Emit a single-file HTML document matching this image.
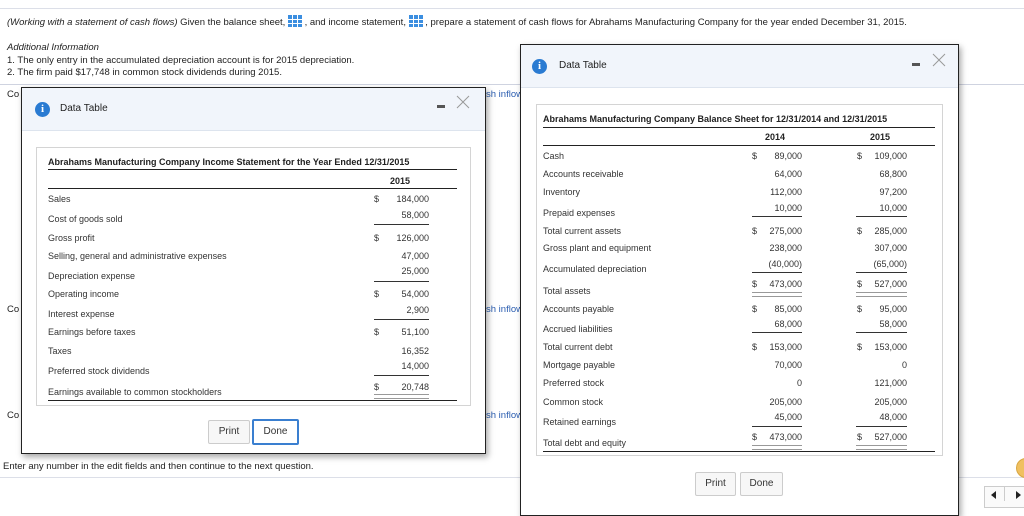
<!DOCTYPE html>
<html><head><meta charset="utf-8"><style>
body{margin:0;width:1024px;height:501px;overflow:hidden;background:#fff;position:relative;font-family:"Liberation Sans",Arial,sans-serif;color:#222}
div{position:absolute}
.t{font-size:9.5px;line-height:12px;white-space:nowrap}
.s{font-size:9px;line-height:12px;white-space:nowrap;color:#333}
.r{text-align:right}
.hl{height:1px;background:#222}
.ul{height:1px;background:#333}
.dbl{height:3px;border-top:1px solid #999;border-bottom:1px solid #999}
.dlg{background:#fff;border:1px solid #222;box-shadow:2px 3px 6px rgba(0,0,0,.35)}
.hdr{background:#f1f5fb;border-bottom:1px solid #dde4ee}
.ic{width:15px;height:15px;border-radius:50%;background:#2a7bd2;color:#fff;font:bold 11px/15px "Liberation Serif",serif;text-align:center}
.btn{border:1px solid #ccc;border-radius:2px;background:#f7f7f7;font-size:10px;line-height:22px;text-align:center;color:#333}
.grid{display:inline-block;width:14px;height:12px;background:#3b8ee0;vertical-align:-2px;background-image:linear-gradient(#fff 0 0),linear-gradient(#fff 0 0),linear-gradient(#fff 0 0),linear-gradient(#fff 0 0);background-size:14px 1px,14px 1px,1px 12px,1px 12px;background-position:0 4px,0 8px,4px 0,9px 0;background-repeat:no-repeat;position:relative}
.bl{color:#2a5db0}
</style></head><body>
<div class="hl" style="left:0;top:8px;width:1024px;background:#dcdfe8"></div>
<div class="t" style="left:7px;top:15px"><i>(Working with a statement of cash flows)</i> Given the balance sheet, <span class="grid"></span> , and income statement, <span class="grid"></span> , prepare a statement of cash flows for Abrahams Manufacturing Company for the year ended December 31, 2015.</div>
<div class="t" style="left:7px;top:42px"><i>Additional Information</i></div>
<div class="t" style="left:7px;top:55px">1. The only entry in the accumulated depreciation account is for 2015 depreciation.</div>
<div class="t" style="left:7px;top:67px">2. The firm paid $17,748 in common stock dividends during 2015.</div>
<div class="hl" style="left:0;top:84px;width:1024px;background:#cfd3e0"></div>
<div class="t" style="left:7px;top:89px">Co</div>
<div class="t" style="left:7px;top:304px">Co</div>
<div class="t" style="left:7px;top:410px">Co</div>
<div class="t bl" style="left:486px;top:89px">sh inflow</div>
<div class="t bl" style="left:486px;top:304px">sh inflow</div>
<div class="t bl" style="left:486px;top:410px">sh inflow</div>
<div class="t" style="left:3px;top:461px">Enter any number in the edit fields and then continue to the next question.</div>
<div class="hl" style="left:0;top:477px;width:1024px;background:#dcdfe8"></div>
<div style="left:1016px;top:458px;width:18px;height:18px;border-radius:50%;background:#f0c060;border:1px solid #d9a640"></div>
<div style="left:984px;top:486px;width:40px;height:20px;border:1px solid #ccc;background:#fafafa"></div>
<div style="left:991px;top:491px;width:0;height:0;border-right:5px solid #222;border-top:4px solid transparent;border-bottom:4px solid transparent"></div>
<div style="left:1004px;top:486px;width:1px;height:15px;background:#ccc"></div>
<div style="left:1016px;top:491px;width:0;height:0;border-left:5px solid #222;border-top:4px solid transparent;border-bottom:4px solid transparent"></div>

<!-- left dialog -->
<div class="dlg" style="left:21px;top:87px;width:463px;height:365px"></div>
<div class="hdr" style="left:22px;top:88px;width:463px;height:42px"></div>
<div class="ic" style="left:35px;top:102px">i</div>
<div class="t" style="left:60px;top:103px;font-size:10px">Data Table</div>
<div style="left:437px;top:105px;width:8px;height:3px;background:#555"></div>
<svg style="position:absolute;left:456px;top:95px" width="14" height="14"><path d="M1 1L13 13M13 1L1 13" stroke="#999" stroke-width="1" fill="none"/></svg>
<div style="left:36px;top:147px;width:433px;height:257px;border:1px solid #d4d4d4"></div>
<div class="s" style="left:48px;top:156px;font-weight:bold;color:#222">Abrahams Manufacturing Company Income Statement for the Year Ended 12/31/2015</div>
<div class="hl" style="left:48px;top:169px;width:409px"></div>
<div class="s" style="left:390px;top:175px;font-weight:bold;color:#222">2015</div>
<div class="hl" style="left:48px;top:188px;width:409px"></div>
<div class="s" style="left:48px;top:193px">Sales</div>
<div class="s" style="left:48px;top:213px">Cost of goods sold</div>
<div class="s" style="left:48px;top:232px">Gross profit</div>
<div class="s" style="left:48px;top:250px">Selling, general and administrative expenses</div>
<div class="s" style="left:48px;top:270px">Depreciation expense</div>
<div class="s" style="left:48px;top:288px">Operating income</div>
<div class="s" style="left:48px;top:308px">Interest expense</div>
<div class="s" style="left:48px;top:326px">Earnings before taxes</div>
<div class="s" style="left:48px;top:345px">Taxes</div>
<div class="s" style="left:48px;top:365px">Preferred stock dividends</div>
<div class="s" style="left:48px;top:386px">Earnings available to common stockholders</div>
<div class="s" style="left:374px;top:193px">$</div>
<div class="s" style="left:374px;top:232px">$</div>
<div class="s" style="left:374px;top:288px">$</div>
<div class="s" style="left:374px;top:326px">$</div>
<div class="s" style="left:374px;top:381px">$</div>
<div class="s r" style="left:380px;width:49px;top:193px">184,000</div>
<div class="s r" style="left:380px;width:49px;top:209px">58,000</div>
<div class="s r" style="left:380px;width:49px;top:232px">126,000</div>
<div class="s r" style="left:380px;width:49px;top:250px">47,000</div>
<div class="s r" style="left:380px;width:49px;top:265px">25,000</div>
<div class="s r" style="left:380px;width:49px;top:288px">54,000</div>
<div class="s r" style="left:380px;width:49px;top:304px">2,900</div>
<div class="s r" style="left:380px;width:49px;top:326px">51,100</div>
<div class="s r" style="left:380px;width:49px;top:345px">16,352</div>
<div class="s r" style="left:380px;width:49px;top:360px">14,000</div>
<div class="s r" style="left:380px;width:49px;top:381px">20,748</div>
<div class="ul" style="left:374px;top:224px;width:55px"></div>
<div class="ul" style="left:374px;top:281px;width:55px"></div>
<div class="ul" style="left:374px;top:319px;width:55px"></div>
<div class="ul" style="left:374px;top:375px;width:55px"></div>
<div class="dbl" style="left:374px;top:394px;width:55px"></div>
<div class="hl" style="left:48px;top:400px;width:409px"></div>
<div class="btn" style="left:208px;top:420px;width:40px">Print</div>
<div class="btn" style="left:252px;top:419px;width:43px;border:2px solid #3a7fd0;background:#fff">Done</div>

<!-- right dialog -->
<div class="dlg" style="left:520px;top:44px;width:437px;height:470px"></div>
<div class="hdr" style="left:521px;top:45px;width:437px;height:42px"></div>
<div class="ic" style="left:532px;top:59px">i</div>
<div class="t" style="left:559px;top:60px;font-size:10px">Data Table</div>
<div style="left:912px;top:63px;width:8px;height:3px;background:#555"></div>
<svg style="position:absolute;left:932px;top:53px" width="14" height="14"><path d="M1 1L13 13M13 1L1 13" stroke="#999" stroke-width="1" fill="none"/></svg>
<div style="left:536px;top:104px;width:405px;height:350px;border:1px solid #d4d4d4"></div>
<div class="s" style="left:543px;top:113px;font-weight:bold;color:#222">Abrahams Manufacturing Company Balance Sheet for 12/31/2014 and 12/31/2015</div>
<div class="hl" style="left:543px;top:127px;width:392px"></div>
<div class="s" style="left:765px;top:131px;font-weight:bold;color:#222">2014</div>
<div class="s" style="left:870px;top:131px;font-weight:bold;color:#222">2015</div>
<div class="hl" style="left:543px;top:145px;width:392px"></div>
<div class="s" style="left:543px;top:150px">Cash</div>
<div class="s" style="left:543px;top:168px">Accounts receivable</div>
<div class="s" style="left:543px;top:186px">Inventory</div>
<div class="s" style="left:543px;top:207px">Prepaid expenses</div>
<div class="s" style="left:543px;top:225px">Total current assets</div>
<div class="s" style="left:543px;top:242px">Gross plant and equipment</div>
<div class="s" style="left:543px;top:263px">Accumulated depreciation</div>
<div class="s" style="left:543px;top:285px">Total assets</div>
<div class="s" style="left:543px;top:303px">Accounts payable</div>
<div class="s" style="left:543px;top:323px">Accrued liabilities</div>
<div class="s" style="left:543px;top:341px">Total current debt</div>
<div class="s" style="left:543px;top:359px">Mortgage payable</div>
<div class="s" style="left:543px;top:377px">Preferred stock</div>
<div class="s" style="left:543px;top:396px">Common stock</div>
<div class="s" style="left:543px;top:416px">Retained earnings</div>
<div class="s" style="left:543px;top:437px">Total debt and equity</div>
<div class="s" style="left:752px;top:150px">$</div>
<div class="s" style="left:752px;top:225px">$</div>
<div class="s" style="left:752px;top:278px">$</div>
<div class="s" style="left:752px;top:303px">$</div>
<div class="s" style="left:752px;top:341px">$</div>
<div class="s" style="left:752px;top:431px">$</div>
<div class="s r" style="left:750px;width:52px;top:150px">89,000</div>
<div class="s r" style="left:750px;width:52px;top:168px">64,000</div>
<div class="s r" style="left:750px;width:52px;top:186px">112,000</div>
<div class="s r" style="left:750px;width:52px;top:202px">10,000</div>
<div class="s r" style="left:750px;width:52px;top:225px">275,000</div>
<div class="s r" style="left:750px;width:52px;top:242px">238,000</div>
<div class="s r" style="left:750px;width:52px;top:258px">(40,000)</div>
<div class="s r" style="left:750px;width:52px;top:278px">473,000</div>
<div class="s r" style="left:750px;width:52px;top:303px">85,000</div>
<div class="s r" style="left:750px;width:52px;top:318px">68,000</div>
<div class="s r" style="left:750px;width:52px;top:341px">153,000</div>
<div class="s r" style="left:750px;width:52px;top:359px">70,000</div>
<div class="s r" style="left:750px;width:52px;top:377px">0</div>
<div class="s r" style="left:750px;width:52px;top:396px">205,000</div>
<div class="s r" style="left:750px;width:52px;top:411px">45,000</div>
<div class="s r" style="left:750px;width:52px;top:431px">473,000</div>
<div class="s" style="left:857px;top:150px">$</div>
<div class="s" style="left:857px;top:225px">$</div>
<div class="s" style="left:857px;top:278px">$</div>
<div class="s" style="left:857px;top:303px">$</div>
<div class="s" style="left:857px;top:341px">$</div>
<div class="s" style="left:857px;top:431px">$</div>
<div class="s r" style="left:855px;width:52px;top:150px">109,000</div>
<div class="s r" style="left:855px;width:52px;top:168px">68,800</div>
<div class="s r" style="left:855px;width:52px;top:186px">97,200</div>
<div class="s r" style="left:855px;width:52px;top:202px">10,000</div>
<div class="s r" style="left:855px;width:52px;top:225px">285,000</div>
<div class="s r" style="left:855px;width:52px;top:242px">307,000</div>
<div class="s r" style="left:855px;width:52px;top:258px">(65,000)</div>
<div class="s r" style="left:855px;width:52px;top:278px">527,000</div>
<div class="s r" style="left:855px;width:52px;top:303px">95,000</div>
<div class="s r" style="left:855px;width:52px;top:318px">58,000</div>
<div class="s r" style="left:855px;width:52px;top:341px">153,000</div>
<div class="s r" style="left:855px;width:52px;top:359px">0</div>
<div class="s r" style="left:855px;width:52px;top:377px">121,000</div>
<div class="s r" style="left:855px;width:52px;top:396px">205,000</div>
<div class="s r" style="left:855px;width:52px;top:411px">48,000</div>
<div class="s r" style="left:855px;width:52px;top:431px">527,000</div>
<div class="ul" style="left:752px;top:216px;width:50px"></div>
<div class="ul" style="left:856px;top:216px;width:51px"></div>
<div class="ul" style="left:752px;top:272px;width:50px"></div>
<div class="ul" style="left:856px;top:272px;width:51px"></div>
<div class="dbl" style="left:752px;top:292px;width:50px"></div>
<div class="dbl" style="left:856px;top:292px;width:51px"></div>
<div class="ul" style="left:752px;top:332px;width:50px"></div>
<div class="ul" style="left:856px;top:332px;width:51px"></div>
<div class="ul" style="left:752px;top:426px;width:50px"></div>
<div class="ul" style="left:856px;top:426px;width:51px"></div>
<div class="dbl" style="left:752px;top:445px;width:50px"></div>
<div class="dbl" style="left:856px;top:445px;width:51px"></div>
<div class="hl" style="left:543px;top:451px;width:392px"></div>
<div class="btn" style="left:695px;top:472px;width:39px">Print</div>
<div class="btn" style="left:740px;top:472px;width:41px">Done</div>
</body></html>
